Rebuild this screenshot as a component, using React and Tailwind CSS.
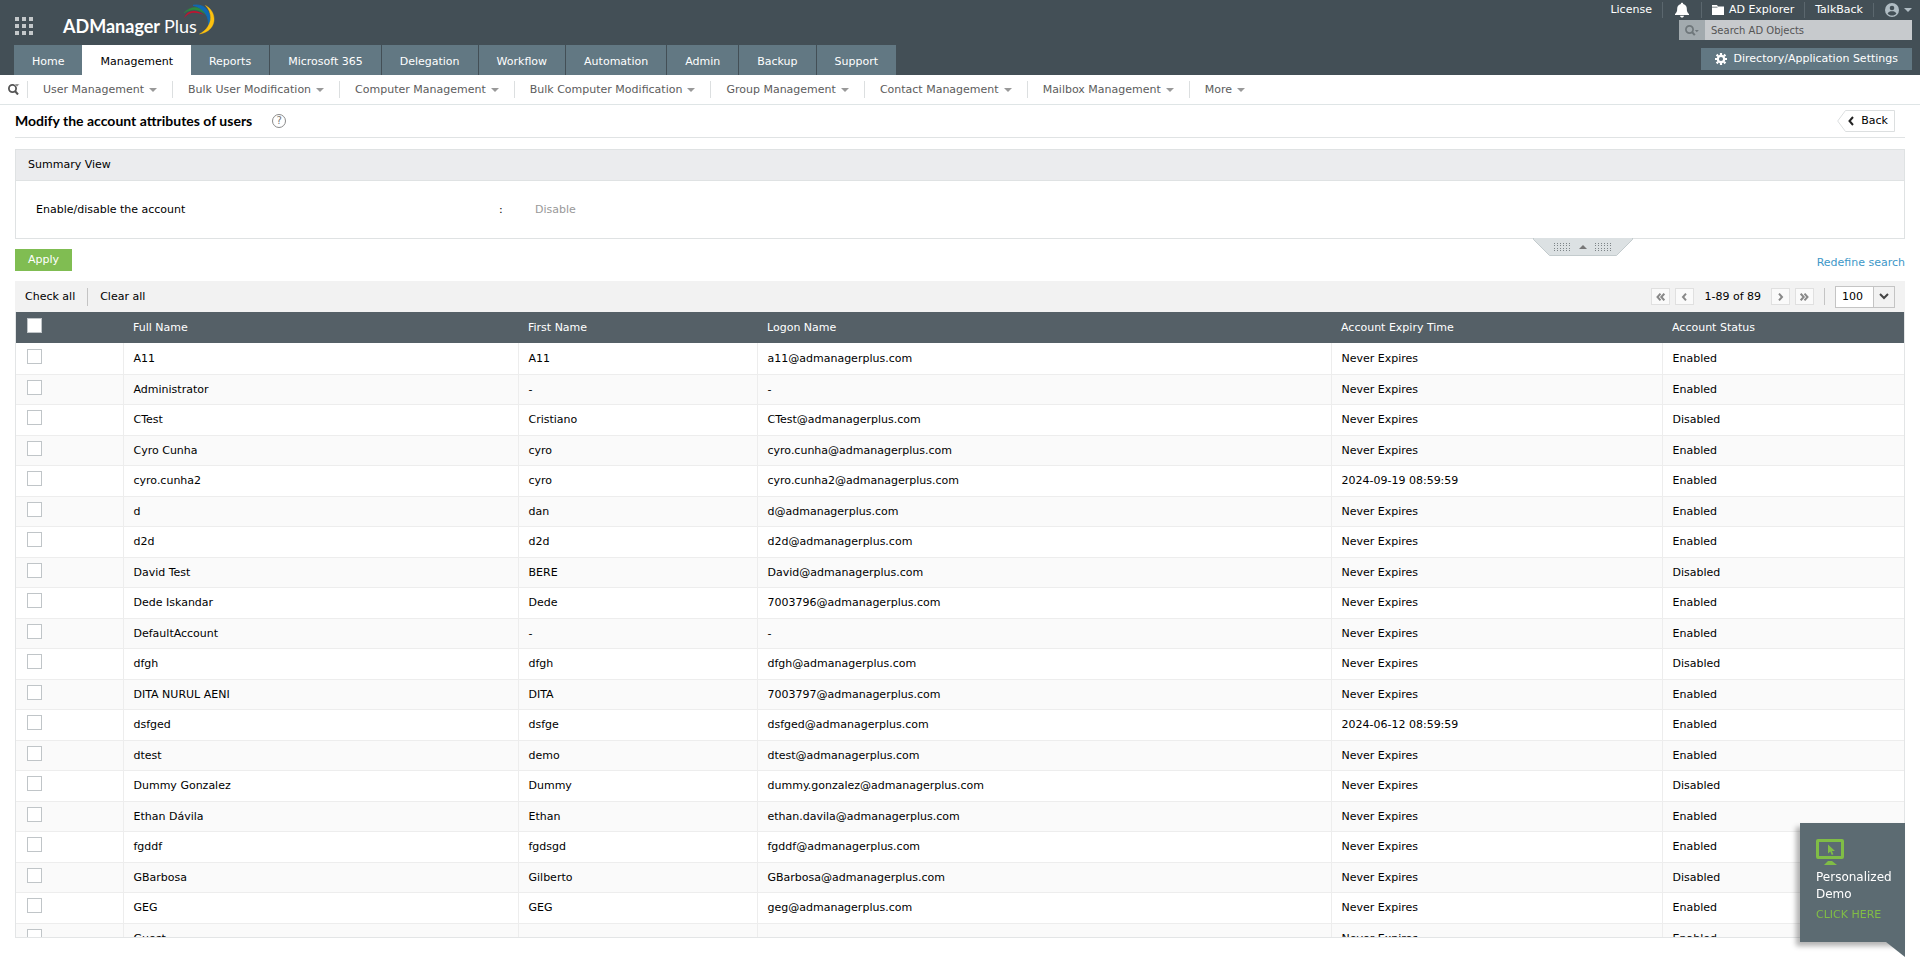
import React from "react";

const tabs = ["Home", "Management", "Reports", "Microsoft 365", "Delegation", "Workflow", "Automation", "Admin", "Backup", "Support"];

const menus = [
  "User Management",
  "Bulk User Modification",
  "Computer Management",
  "Bulk Computer Modification",
  "Group Management",
  "Contact Management",
  "Mailbox Management",
  "More",
];

const NEVER = "Never Expires";
const users = [
  ["A11", "A11", "a11@admanagerplus.com", NEVER, "Enabled"],
  ["Administrator", "-", "-", NEVER, "Enabled"],
  ["CTest", "Cristiano", "CTest@admanagerplus.com", NEVER, "Disabled"],
  ["Cyro Cunha", "cyro", "cyro.cunha@admanagerplus.com", NEVER, "Enabled"],
  ["cyro.cunha2", "cyro", "cyro.cunha2@admanagerplus.com", "2024-09-19 08:59:59", "Enabled"],
  ["d", "dan", "d@admanagerplus.com", NEVER, "Enabled"],
  ["d2d", "d2d", "d2d@admanagerplus.com", NEVER, "Enabled"],
  ["David Test", "BERE", "David@admanagerplus.com", NEVER, "Disabled"],
  ["Dede Iskandar", "Dede", "7003796@admanagerplus.com", NEVER, "Enabled"],
  ["DefaultAccount", "-", "-", NEVER, "Enabled"],
  ["dfgh", "dfgh", "dfgh@admanagerplus.com", NEVER, "Disabled"],
  ["DITA NURUL AENI", "DITA", "7003797@admanagerplus.com", NEVER, "Enabled"],
  ["dsfged", "dsfge", "dsfged@admanagerplus.com", "2024-06-12 08:59:59", "Enabled"],
  ["dtest", "demo", "dtest@admanagerplus.com", NEVER, "Enabled"],
  ["Dummy Gonzalez", "Dummy", "dummy.gonzalez@admanagerplus.com", NEVER, "Disabled"],
  ["Ethan Dávila", "Ethan", "ethan.davila@admanagerplus.com", NEVER, "Enabled"],
  ["fgddf", "fgdsgd", "fgddf@admanagerplus.com", NEVER, "Enabled"],
  ["GBarbosa", "Gilberto", "GBarbosa@admanagerplus.com", NEVER, "Disabled"],
  ["GEG", "GEG", "geg@admanagerplus.com", NEVER, "Enabled"],
  ["Guest", "-", "-", NEVER, "Enabled"],
];

const columns = ["Full Name", "First Name", "Logon Name", "Account Expiry Time", "Account Status"];

function Caret({ className }) {
  return (
    <svg className={className} width="8" height="4" viewBox="0 0 8 4" aria-hidden="true">
      <path d="M0 0h8L4 4z" fill="currentColor" />
    </svg>
  );
}

function Chevron({ double, flip }) {
  return (
    <svg width="9" height="8" viewBox="0 0 9 8" fill="none" stroke="currentColor" strokeWidth="2" className={flip ? "rotate-180" : ""} aria-hidden="true">
      {double ? <path d="M4.500 .7 1.500 4l3 3.300M8.300 .7 5.300 4l3 3.300" /> : <path d="M6 .7 3 4l3 3.300" />}
    </svg>
  );
}

function Logo() {
  return (
    <div className="relative ml-[30px] flex h-[22px] items-center font-['Lato',sans-serif] text-[18px] leading-[22px] text-white">
      <span className="font-bold">ADManager</span>
      <span className="ml-1">Plus</span>
      <svg className="absolute -top-[11px] left-[120px]" width="33" height="31" viewBox="0 0 33 31" aria-hidden="true">
        <path d="M1 14.500C3 7 12 3.500 21.500 11.500C14 7.500 5.500 7.500 1 14.500z" fill="#c4122f" />
        <path d="M1 9C8 .5 22 1.500 26 14C20.500 6 9.500 3 1 9z" fill="#2c8a3f" stroke="#2c8a3f" strokeWidth=".5" />
        <path d="M10 1.300C22-1 31 9 25.500 23.500C26.500 12 21 4 10 1.300z" fill="#0f6ab4" stroke="#0f6ab4" strokeWidth=".8" />
        <path d="M22.500 1.500C35 8 34.500 27 16.500 30C28 24 31.500 11 22.500 1.500z" fill="#fdc10e" stroke="#fdc10e" strokeWidth=".4" />
      </svg>
    </div>
  );
}

function Header() {
  return (
    <header className="flex h-[75px] justify-between bg-[#434f56] text-white">
      <div className="flex flex-col justify-between pl-[14px]">
        <div className="flex items-center pt-[15px]">
          <button aria-label="Apps" className="ml-px">
            <svg width="18" height="18" viewBox="0 0 18 18" fill="#c4c8ca" aria-hidden="true">
              {[0, 7, 14].map((y) => [0, 7, 14].map((x) => <rect key={`${x}-${y}`} x={x} y={y} width="4" height="4" />))}
            </svg>
          </button>
          <Logo />
        </div>
        <nav className="flex h-[30px] gap-px" aria-label="Main">
          {tabs.map((t) => (
            <a key={t} href="#" className={`flex items-center px-[18px] pt-1 whitespace-nowrap ${t === "Management" ? "-mx-px bg-white text-black" : "bg-[#627883]"}`}>
              {t}
            </a>
          ))}
        </nav>
      </div>
      <div className="flex flex-col items-end pr-2">
        <div className="flex h-[20px] items-center pb-px">
          <a href="#" className="px-[10px]">License</a>
          <button aria-label="Notifications" className="border-l border-[#5b676e] px-3">
            <svg width="14" height="16" viewBox="0 0 14 16" fill="currentColor" aria-hidden="true">
              <path d="M7 .8c.8 0 1.200.5 1.200 1.100C10.600 2.500 11.800 4.500 11.800 6.500c0 3 .6 4.200 2.200 5.400v1H0v-1C1.600 10.700 2.200 9.500 2.200 6.500c0-2 1.200-4 3.600-4.600 0-.6.4-1.100 1.200-1.100zM5 13.700h4c-.2 1.200-.9 1.800-2 1.800s-1.800-.6-2-1.800z" />
            </svg>
          </button>
          <a href="#" className="flex items-center gap-[5px] border-l border-[#5b676e] px-[10px]">
            <svg width="12" height="10" viewBox="0 0 12 10" fill="currentColor" aria-hidden="true">
              <path d="M0 0h5l1 1.500h6V10H0z" />
              <path d="M0 2.200h5.500" stroke="#434f56" strokeWidth=".7" />
            </svg>
            AD Explorer
          </a>
          <a href="#" className="border-l border-[#5b676e] px-[10px]">TalkBack</a>
          <button aria-label="Account" className="flex items-center gap-[5px] border-l border-[#5b676e] pl-[11px] text-[#b0bcc3]">
            <svg width="14" height="14" viewBox="0 0 14 14" aria-hidden="true">
              <circle cx="7" cy="7" r="7" fill="currentColor" />
              <circle cx="7" cy="5" r="2.300" fill="#434f56" />
              <path d="M2.600 10.600C3.400 8.700 5 8.200 7 8.200s3.600.5 4.400 2.400C10.300 12 8.800 12.600 7 12.600s-3.300-.6-4.400-2z" fill="#434f56" />
            </svg>
            <Caret />
          </button>
        </div>
        <div className="flex h-[20px] w-[233px] bg-[#c7cacd]">
          <button aria-label="Search options" className="flex w-[26px] items-center justify-center bg-[#a2aaae] text-[#6f777b]">
            <svg width="14" height="11" viewBox="0 0 14 11" fill="none" stroke="currentColor" aria-hidden="true">
              <circle cx="4.500" cy="4.500" r="3.600" strokeWidth="1.700" />
              <path d="m7 7 2.800 3.200" strokeWidth="2" />
              <path d="M9.800 5h4l-2 2.200z" fill="currentColor" stroke="none" />
            </svg>
          </button>
          <input aria-label="Search AD Objects" placeholder="Search AD Objects" className="min-w-0 flex-1 bg-transparent px-[6px] pt-px text-[10px] text-[#555] outline-none placeholder:text-[#555]" />
        </div>
        <button className="mt-2 flex h-[22px] items-center gap-[7px] bg-[#627883] px-[14px]">
          <svg width="12" height="12" viewBox="0 0 12 12" fill="none" stroke="currentColor" aria-hidden="true">
            <circle cx="6" cy="6" r="3.200" strokeWidth="2.200" />
            <path strokeWidth="2.200" d="M6 0v2M6 10v2M0 6h2M10 6h2M1.600 1.600l1.600 1.600M8.800 8.800l1.600 1.600M1.600 10.400l1.600-1.600M8.800 3.200l1.600-1.600" />
          </svg>
          Directory/Application Settings
        </button>
      </div>
    </header>
  );
}

function SubNav() {
  return (
    <nav className="flex h-[30px] items-center border-b border-[#dfe5e6] text-[#5c5c5c]" aria-label="Management">
      <button aria-label="Search menu" className="flex w-[27px] pl-2">
        <svg width="12" height="11" viewBox="0 0 12 11" fill="none" stroke="#555" aria-hidden="true">
          <circle cx="4.500" cy="4.500" r="3.600" strokeWidth="1.800" />
          <path d="m7 7 3 3.500" strokeWidth="2" />
          <path d="M6.500 0H11.500L9 2.800z" fill="#777" stroke="#fff" strokeWidth=".5" />
        </svg>
      </button>
      {menus.map((m) => (
        <button key={m} className="flex h-[17px] items-center gap-[5px] border-l border-[#dcdfe0] pl-[15px] pr-[15px] pt-px whitespace-nowrap">
          {m}
          <Caret className="text-[#999]" />
        </button>
      ))}
    </nav>
  );
}

function Check({ label }) {
  return <input type="checkbox" aria-label={label} className="block size-[15px] appearance-none border border-[#c0c5c8] bg-white checked:bg-[#627883]" />;
}

function PageButton({ label, double, flip }) {
  return (
    <button aria-label={label} className="flex h-[17px] w-[19px] items-center justify-center border border-[#e0e0e0] bg-[#fafafa] text-[#888]">
      <Chevron double={double} flip={flip} />
    </button>
  );
}

function Toolbar() {
  return (
    <div className="flex h-[31px] items-center justify-between bg-[#f2f2f2] px-[10px]">
      <div className="flex items-center">
        <button className="pr-3">Check all</button>
        <button className="border-l border-[#c4c4c4] py-px pl-3">Clear all</button>
      </div>
      <div className="flex items-center">
        <div className="flex gap-[5px]">
          <PageButton label="First page" double />
          <PageButton label="Previous page" />
        </div>
        <span className="mx-[10px]">1-89 of 89</span>
        <div className="flex gap-[5px]">
          <PageButton label="Next page" flip />
          <PageButton label="Last page" double flip />
        </div>
        <div className="ml-[10px] h-[17px] w-px bg-[#c4c4c4]" />
        <div className="relative ml-[10px] flex h-[22px] w-[60px] border border-[#c4c4c4] bg-white">
          <select aria-label="Rows per page" className="w-full appearance-none bg-transparent pl-[6px]" defaultValue="100">
            <option>25</option>
            <option>50</option>
            <option>100</option>
          </select>
          <span className="pointer-events-none absolute inset-y-0 right-0 flex w-[21px] items-center justify-center border-l border-[#c4c4c4] bg-[#f2f2f2]">
            <svg width="10" height="7" viewBox="0 0 10 7" fill="none" stroke="#444" strokeWidth="2" aria-hidden="true">
              <path d="m1 1 4 4 4-4" />
            </svg>
          </span>
        </div>
      </div>
    </div>
  );
}

function UserTable() {
  return (
    <div className="h-[626px] overflow-hidden border-x border-b border-[#e3e5e6]">
      <table className="w-full table-fixed border-collapse text-left">
        <colgroup>
          <col className="w-[107px]" />
          <col className="w-[395px]" />
          <col className="w-[239px]" />
          <col className="w-[574px]" />
          <col className="w-[331px]" />
          <col className="w-[242px]" />
        </colgroup>
        <thead>
          <tr className="h-[31px] bg-[#556067] text-white">
            <th className="pb-1 pl-[11px]"><Check label="Select all" /></th>
            {columns.map((c) => (
              <th key={c} className="pl-[10px] font-normal">{c}</th>
            ))}
          </tr>
        </thead>
        <tbody>
          {users.map((u) => (
            <tr key={u[0]} className="border-b border-[#ededed] odd:h-[31px] even:h-[30px] even:bg-[#fafafa]">
              <td className="pb-1 pl-[11px]"><Check label={`Select ${u[0]}`} /></td>
              {u.map((v, i) => (
                <td key={i} className="border-l border-[#ededed] pl-[10px] pt-px">{v}</td>
              ))}
            </tr>
          ))}
        </tbody>
      </table>
    </div>
  );
}

function DotGrid() {
  return (
    <svg width="17" height="8" viewBox="0 0 17 8" fill="#7d8487" aria-hidden="true">
      {[0, 2, 5, 7].map((y) => [0, 3, 6, 9, 12, 15].map((x) => <rect key={`${x}-${y}`} x={x} y={y} width="1" height="1" />))}
    </svg>
  );
}

function Summary() {
  return (
    <section className="relative mt-[11px] border border-[#dfe2e3]">
      <h2 className="flex h-[31px] items-center border-b border-[#dfe2e3] bg-[#ebecee] px-3">Summary View</h2>
      <dl className="flex h-[57px] items-center pl-5">
        <dt className="w-[463px]">Enable/disable the account</dt>
        <dd className="flex"><span className="w-9">:</span><span className="text-[#999]">Disable</span></dd>
      </dl>
      <button aria-label="Collapse summary" className="absolute right-[271px] top-full flex h-[18px] w-[100px] items-center justify-center">
        <svg className="absolute inset-0" width="100" height="18" viewBox="0 0 100 18" aria-hidden="true">
          <path d="M.5 0h99v1.500L83.500 17.500h-67L.5 1.500z" fill="#dce1e3" />
          <path d="M.5 0v1.500l16 16h67l16-16V0" fill="none" stroke="#c3cbcd" />
        </svg>
        <span className="relative flex items-center gap-2">
          <DotGrid />
          <Caret className="rotate-180 text-[#777]" />
          <DotGrid />
        </span>
      </button>
    </section>
  );
}

function DemoCard() {
  return (
    <aside className="fixed bottom-[21px] right-[15px] w-[105px] bg-[#5c6b72] pb-[19px] pl-4 pt-4 text-white shadow-[-4px_4px_5px_rgba(0,0,0,0.3)]">
      <svg width="28" height="26" viewBox="0 0 28 26" aria-hidden="true">
        <rect x="1.500" y="1.500" width="25" height="17" rx=".5" fill="none" stroke="#80bd46" strokeWidth="3" />
        <path d="M12 22h4l5 4H8z" fill="#80bd46" />
        <path d="M12 5.500v9l2.300-2 1.500 3.500 1.600-.8-1.500-3.200h3.100z" fill="#80bd46" />
      </svg>
      <p className="mt-1 text-[12px] leading-[17px]">Personalized Demo</p>
      <a href="#" className="mt-1 block leading-[16px] text-[#80bd46]">CLICK HERE</a>
      <svg className="absolute right-0 top-full" width="19" height="15" viewBox="0 0 19 15" aria-hidden="true">
        <path d="M0 0h19v15z" fill="#5c6b72" />
      </svg>
    </aside>
  );
}

export default function App() {
  return (
    <div className="min-h-screen bg-white font-['DejaVu_Sans',sans-serif] text-[11px] leading-[16px] text-black">
      <Header />
      <SubNav />
      <main className="px-[15px]">
        <div className="flex h-[33px] items-center justify-between border-b border-[#e0e3e4] pr-[10px]">
          <div className="flex items-center gap-5">
            <h1 className="font-['Lato',sans-serif] text-[14px] font-bold leading-[18px]">Modify the account attributes of users</h1>
            <button aria-label="Help" className="flex size-[14px] items-center justify-center rounded-full border border-[#8a8a8a] text-[10px] leading-none text-[#777]">?</button>
          </div>
          <button className="relative flex h-[22px] w-[58px] items-center justify-end gap-[7px] pr-[7px]">
            <svg className="absolute inset-0" width="58" height="22" viewBox="0 0 58 22" fill="#fff" stroke="#dcdfe0" aria-hidden="true">
              <path d="M.7 11 8.500.5h49v21h-49z" />
            </svg>
            <svg className="relative" width="6" height="10" viewBox="0 0 6 10" fill="none" stroke="#222" strokeWidth="2" aria-hidden="true">
              <path d="M5 1 1.500 5 5 9" />
            </svg>
            <span className="relative">Back</span>
          </button>
        </div>
        <Summary />
        <div className="flex h-[42px] items-start justify-between pt-[10px]">
          <button className="h-[22px] bg-[#80bd52] px-[13px] text-white">Apply</button>
          <a href="#" className="mt-[6px] text-[#3d97c8]">Redefine search</a>
        </div>
        <Toolbar />
        <UserTable />
      </main>
      <DemoCard />
    </div>
  );
}
